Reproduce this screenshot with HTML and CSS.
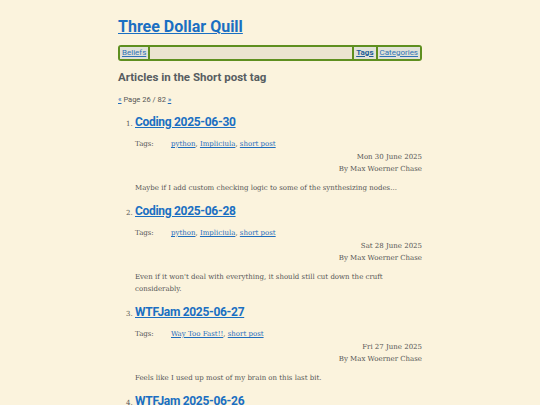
FILE: index.html
```html
<!DOCTYPE html>
<html lang="en">
<head>
    <meta charset="UTF-8">
    <meta name="viewport" content="width=device-width, initial-scale=1.0">
    <title>Short post - Three Dollar Quill</title>
    <link rel="stylesheet" href="styles.css">
</head>
<body>
    <div class="page">
        <header>
            <h1 class="site-title"><a href="#">Three Dollar Quill</a></h1>
            <nav class="menu">
                <ul class="menu-left">
                    <li class="menu-item"><a href="#">Beliefs</a></li>
                </ul>
                <ul class="menu-right">
                    <li class="menu-item current"><a href="#">Tags</a></li>
                    <li class="menu-item"><a href="#">Categories</a></li>
                </ul>
            </nav>
        </header>

        <main>
            <h2 class="list-title">Articles in the Short post tag</h2>
            <p class="pager"><a href="#">&laquo;</a> Page 26 / 82 <a href="#">&raquo;</a></p>

            <ol class="articles">
                <li>
                    <article class="entry">
                        <h3 class="entry-title"><a href="#">Coding 2025-06-30</a></h3>
                        <div class="entry-tags">
                            <span class="tags-label">Tags:</span>
                            <span><a href="#">python</a>, <a href="#">Impliciula</a>, <a href="#">short post</a></span>
                        </div>
                        <div class="entry-meta">
                            <div>Mon 30 June 2025</div>
                            <div>By Max Woerner Chase</div>
                        </div>
                        <p class="summary">Maybe if I add custom checking logic to some of the synthesizing nodes...</p>
                    </article>
                </li>
                <li>
                    <article class="entry">
                        <h3 class="entry-title"><a href="#">Coding 2025-06-28</a></h3>
                        <div class="entry-tags">
                            <span class="tags-label">Tags:</span>
                            <span><a href="#">python</a>, <a href="#">Impliciula</a>, <a href="#">short post</a></span>
                        </div>
                        <div class="entry-meta">
                            <div>Sat 28 June 2025</div>
                            <div>By Max Woerner Chase</div>
                        </div>
                        <p class="summary">Even if it won't deal with everything, it should still cut down the cruft considerably.</p>
                    </article>
                </li>
                <li>
                    <article class="entry">
                        <h3 class="entry-title"><a href="#">WTFJam 2025-06-27</a></h3>
                        <div class="entry-tags">
                            <span class="tags-label">Tags:</span>
                            <span><a href="#">Way Too Fast!!</a>, <a href="#">short post</a></span>
                        </div>
                        <div class="entry-meta">
                            <div>Fri 27 June 2025</div>
                            <div>By Max Woerner Chase</div>
                        </div>
                        <p class="summary">Feels like I used up most of my brain on this last bit.</p>
                    </article>
                </li>
                <li>
                    <article class="entry">
                        <h3 class="entry-title"><a href="#">WTFJam 2025-06-26</a></h3>
                    </article>
                </li>
            </ol>
        </main>
    </div>
</body>
</html>
```

FILE: styles.css
```css
body {
    margin: 0;
    background-color: #fbf3dd;
    color: #555555;
    font-family: "DejaVu Serif", serif;
    font-size: 7px;
    line-height: 12px;
}
a {
    color: #1f6dbd;
}
.page {
    width: 304px;
    margin: 0 auto;
}
.site-title {
    margin: 15px 0 0;
    font-family: Roboto, sans-serif;
    font-size: 16px;
    line-height: 24px;
    font-weight: 700;
}
.site-title a {
    color: #1a6fc2;
}
.menu {
    display: flex;
    justify-content: space-between;
    margin-top: 6px;
    height: 12px;
    border: 2px solid #5e8f1f;
    border-radius: 3px;
    background-color: #ebe4d0;
    font-family: Roboto, sans-serif;
    font-size: 8px;
    line-height: 12px;
}
.menu ul {
    display: flex;
    margin: 0;
    padding: 0;
    list-style: none;
}
.menu-item {
    padding: 0 2px;
    background-color: #e1e2d8;
}
.menu-left .menu-item {
    border-right: 2px solid #5e8f1f;
}
.menu-right .menu-item:first-child {
    border-left: 2px solid #5e8f1f;
    border-right: 2px solid #5e8f1f;
}
.menu-item a {
    color: #2f72b6;
}
.menu-item.current a {
    color: #215d97;
    font-weight: 700;
}
.list-title {
    margin: 7px 0 0;
    font-family: Roboto, sans-serif;
    font-size: 11.5px;
    line-height: 18px;
    font-weight: 700;
    color: #575d61;
}
.pager {
    margin: 8px 0 0;
    font-family: Roboto, sans-serif;
    font-size: 7.5px;
}
.articles {
    margin: 6px 0 0;
    padding-left: 17px;
}
.articles li::marker {
    font-size: 7px;
}
.entry {
    padding-bottom: 7px;
}
.entry-title {
    margin: 0;
    font-family: Roboto, sans-serif;
    font-size: 12px;
    line-height: 20px;
    font-weight: 700;
    letter-spacing: -0.3px;
}
.entry-title a {
    color: #1a6fc2;
}
.entry-tags {
    display: flex;
    margin-top: 6px;
}
.tags-label {
    width: 36px;
}
.entry-meta {
    margin-top: 1px;
    text-align: right;
}
.summary {
    margin: 7px 0 0;
}
```
